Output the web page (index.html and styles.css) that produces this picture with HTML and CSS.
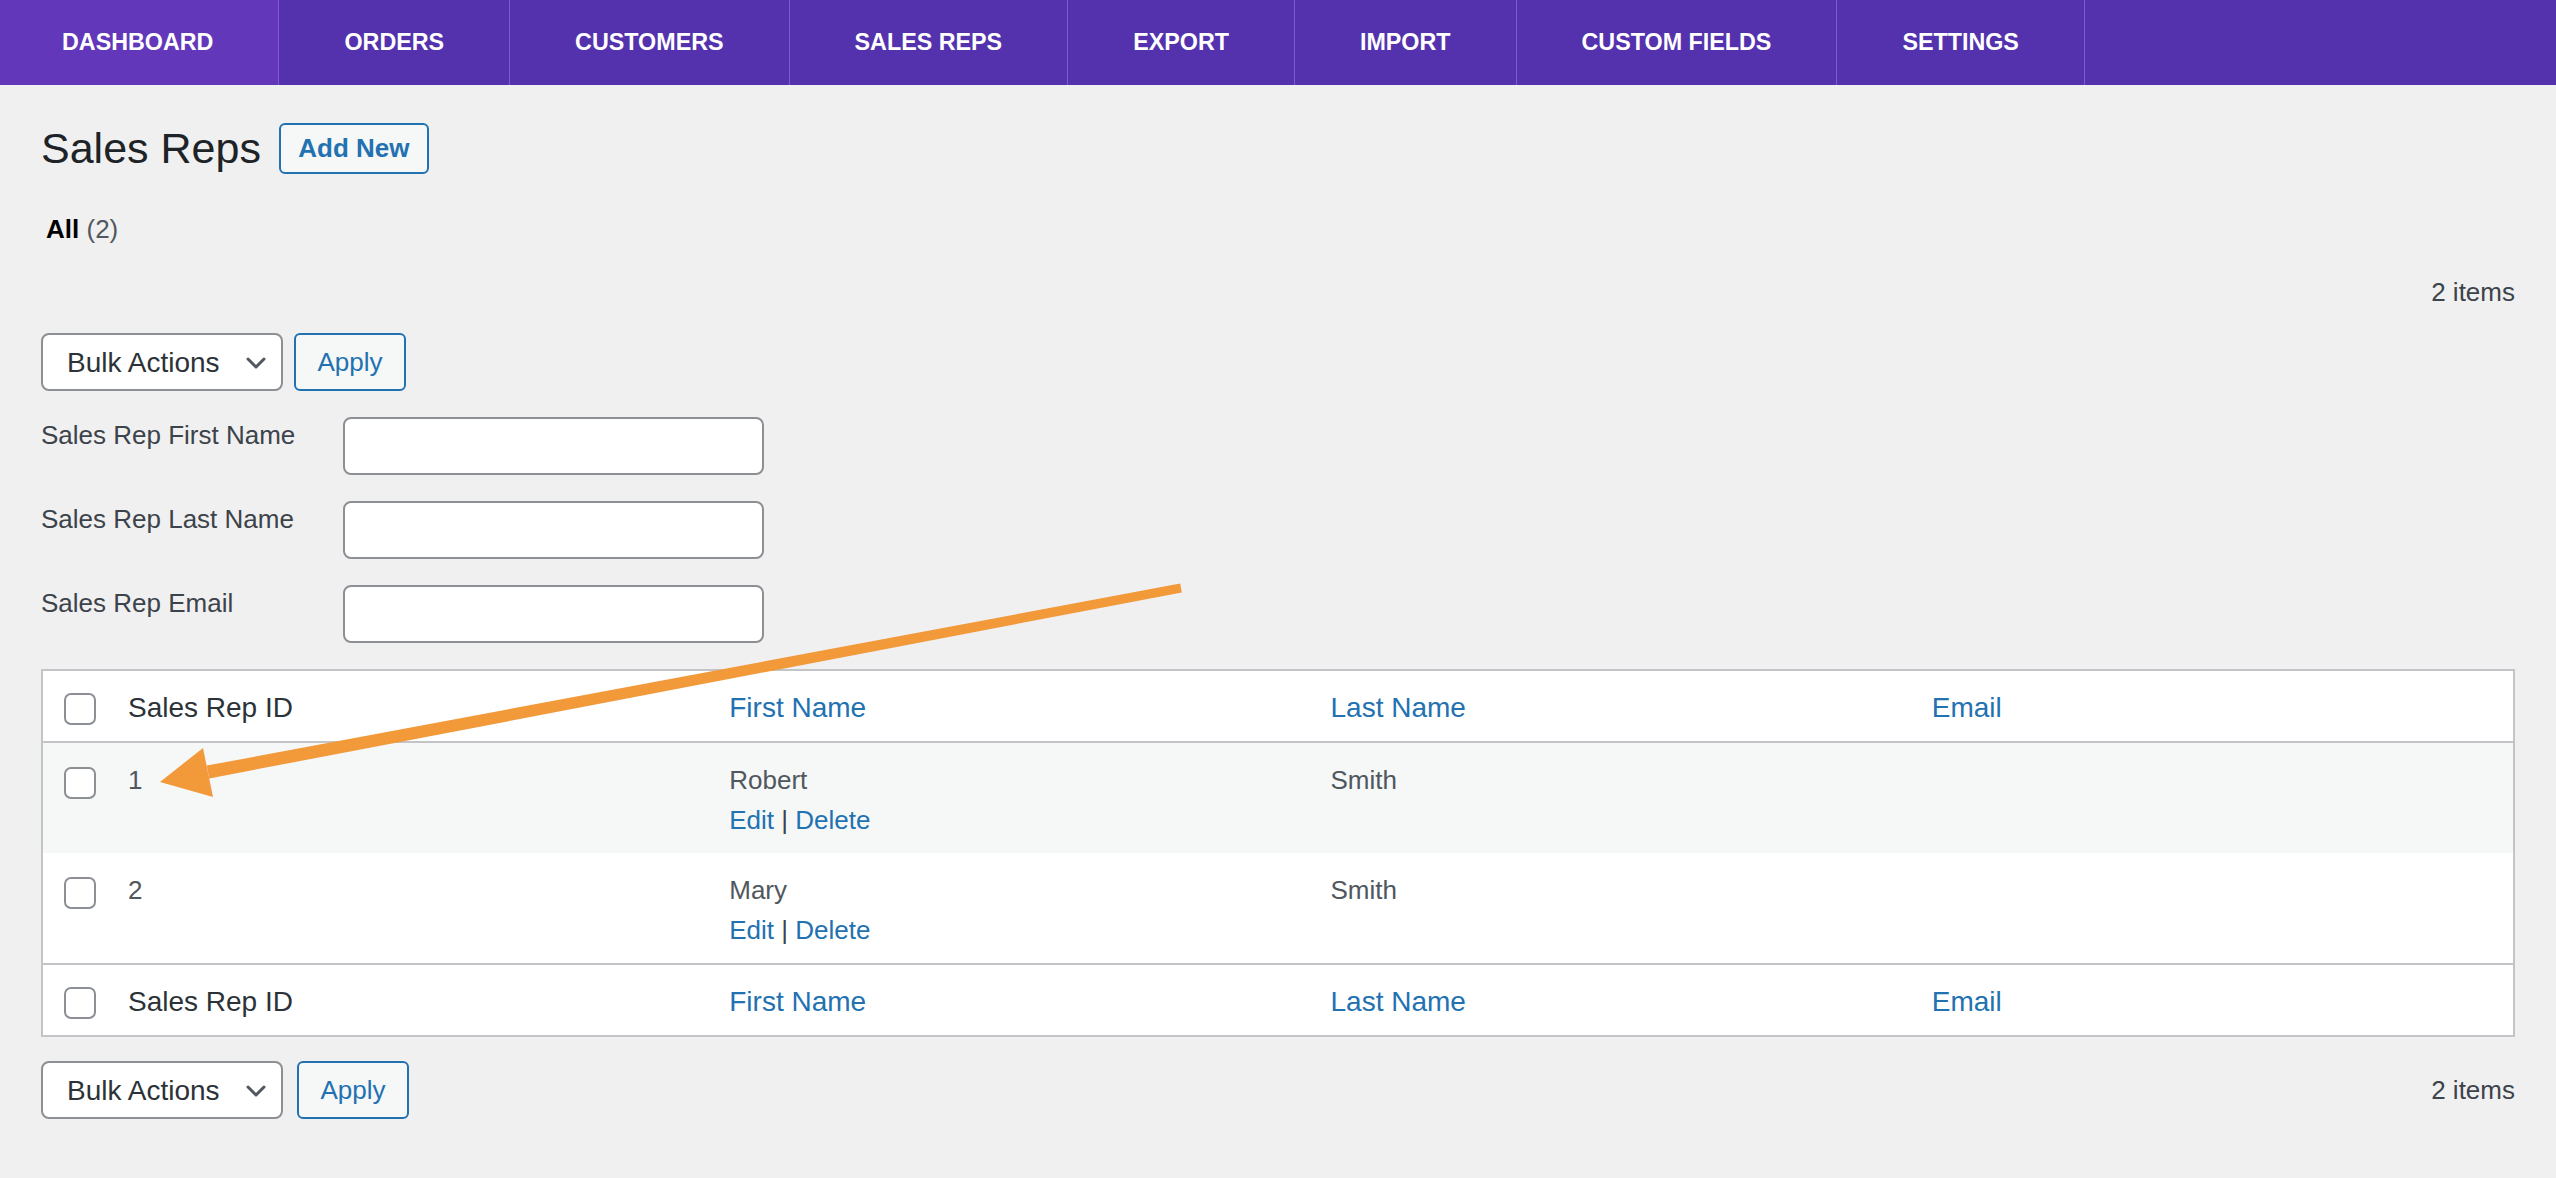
FILE: index.html
```html
<!DOCTYPE html>
<html lang="en">
<head>
<meta charset="utf-8">
<title>Sales Reps</title>
<link rel="stylesheet" href="styles.css">
</head>
<body>
<nav class="topnav">
  <a class="nav-item active" href="#">DASHBOARD</a>
  <a class="nav-item" href="#">ORDERS</a>
  <a class="nav-item" href="#">CUSTOMERS</a>
  <a class="nav-item" href="#">SALES REPS</a>
  <a class="nav-item" href="#">EXPORT</a>
  <a class="nav-item" href="#">IMPORT</a>
  <a class="nav-item" href="#">CUSTOM FIELDS</a>
  <a class="nav-item" href="#">SETTINGS</a>
</nav>

<main class="wrap">
  <div class="title-row">
    <h1 class="page-title">Sales Reps</h1>
    <a class="btn-outline add-new" href="#">Add New</a>
  </div>

  <div class="views"><strong>All</strong> <span class="count">(2)</span></div>

  <div class="items-count top-count">2 items</div>

  <div class="tablenav top">
    <div class="select-wrap">
      <select class="bulk-select"><option>Bulk Actions</option></select>
      <svg class="chevron" width="20" height="12" viewBox="0 0 20 12"><polyline points="2,2 10,10 18,2" fill="none" stroke="#50575e" stroke-width="3" stroke-linecap="round" stroke-linejoin="round"/></svg>
    </div>
    <button class="btn-outline apply" type="button">Apply</button>
  </div>

  <div class="filters">
    <div class="filter-row"><label>Sales Rep First Name</label><input class="text-input" type="text"></div>
    <div class="filter-row"><label>Sales Rep Last Name</label><input class="text-input" type="text"></div>
    <div class="filter-row"><label>Sales Rep Email</label><input class="text-input" type="text"></div>
  </div>

  <table class="list-table">
    <colgroup>
      <col class="col-cb">
      <col><col><col><col>
    </colgroup>
    <thead>
      <tr>
        <th class="cb"><input class="checkbox" type="checkbox"></th>
        <th>Sales Rep ID</th>
        <th><a href="#">First Name</a></th>
        <th><a href="#">Last Name</a></th>
        <th><a href="#">Email</a></th>
      </tr>
    </thead>
    <tbody>
      <tr class="alt">
        <td class="cb"><input class="checkbox" type="checkbox"></td>
        <td>1</td>
        <td>Robert<div class="row-actions"><a href="#">Edit</a> <span class="sep">|</span> <a href="#">Delete</a></div></td>
        <td>Smith</td>
        <td></td>
      </tr>
      <tr>
        <td class="cb"><input class="checkbox" type="checkbox"></td>
        <td>2</td>
        <td>Mary<div class="row-actions"><a href="#">Edit</a> <span class="sep">|</span> <a href="#">Delete</a></div></td>
        <td>Smith</td>
        <td></td>
      </tr>
    </tbody>
    <tfoot>
      <tr>
        <th class="cb"><input class="checkbox" type="checkbox"></th>
        <th>Sales Rep ID</th>
        <th><a href="#">First Name</a></th>
        <th><a href="#">Last Name</a></th>
        <th><a href="#">Email</a></th>
      </tr>
    </tfoot>
  </table>

  <div class="tablenav bottom">
    <div class="bulk-group">
      <div class="select-wrap">
        <select class="bulk-select"><option>Bulk Actions</option></select>
        <svg class="chevron" width="20" height="12" viewBox="0 0 20 12"><polyline points="2,2 10,10 18,2" fill="none" stroke="#50575e" stroke-width="3" stroke-linecap="round" stroke-linejoin="round"/></svg>
      </div>
      <button class="btn-outline apply" type="button">Apply</button>
    </div>
    <div class="items-count">2 items</div>
  </div>
</main>

<svg class="annotation" width="2556" height="1178" viewBox="0 0 2556 1178">
  <polygon points="1180.2,583.6 1181.8,592.4 209.2,778.4 206.8,765.6" fill="#f2993a"/>
  <polygon points="160,782 203,748 213,797" fill="#f2993a"/>
</svg>
</body>
</html>
```

FILE: styles.css
```css
* {
  box-sizing: border-box;
}

html,
body {
  margin: 0;
  padding: 0;
}

body {
  position: relative;
  min-height: 1178px;
  background: #f0f0f1;
  font-family: "Liberation Sans", Arial, sans-serif;
  font-size: 26px;
  color: #3c434a;
}

/* Top navigation */
.topnav {
  display: flex;
  height: 85px;
  background: #5532ad;
}

.nav-item {
  display: block;
  padding: 0 65px;
  line-height: 85px;
  font-size: 23.3px;
  font-weight: 700;
  color: #fff;
  text-decoration: none;
  white-space: nowrap;
  border-right: 1px solid #7a5ccf;
}

.nav-item.active {
  background: #6337ba;
  padding-left: 62px;
}

/* Content */
.wrap {
  padding: 0 41px;
}

.title-row {
  display: flex;
  align-items: center;
  height: 51px;
  margin-top: 38px;
}

.page-title {
  margin: 0;
  font-size: 43px;
  font-weight: 400;
  line-height: 51px;
  color: #1d2327;
}

.btn-outline {
  display: inline-flex;
  align-items: center;
  justify-content: center;
  padding: 0;
  border: 2px solid #2271b1;
  border-radius: 6px;
  background: #f6f7f7;
  color: #2271b1;
  font-family: inherit;
  font-size: 26px;
  text-decoration: none;
}

.add-new {
  width: 150px;
  height: 51px;
  margin-left: 18px;
  font-weight: 700;
}

.views {
  margin-top: 37px;
  padding-left: 5px;
  line-height: 36px;
}

.views strong {
  color: #000;
}

.views .count {
  color: #50575e;
}

.items-count {
  line-height: 36px;
  text-align: right;
  color: #3c434a;
}

.top-count {
  margin-top: 27px;
}

.tablenav {
  display: flex;
  align-items: center;
  height: 58px;
  margin-top: 23px;
}

.tablenav.bottom {
  justify-content: space-between;
  margin-top: 24px;
}

.bulk-group {
  display: flex;
  align-items: center;
}

.select-wrap {
  position: relative;
  width: 242px;
  height: 58px;
}

.bulk-select {
  -webkit-appearance: none;
  appearance: none;
  width: 100%;
  height: 100%;
  margin: 0;
  padding: 0 0 0 24px;
  border: 2px solid #8c8f94;
  border-radius: 8px;
  background: #fff;
  font-family: inherit;
  font-size: 28px;
  color: #2c3338;
}

.chevron {
  position: absolute;
  left: 205px;
  top: 24px;
  pointer-events: none;
}

.apply {
  width: 112px;
  height: 58px;
  margin-left: 11px;
}

.tablenav.bottom .apply {
  margin-left: 14px;
}

/* Filters */
.filters {
  display: flex;
  flex-direction: column;
  gap: 26px;
  margin-top: 26px;
}

.filter-row {
  display: flex;
  align-items: flex-start;
}

.filter-row label {
  width: 302px;
  line-height: 36px;
  color: #3c434a;
}

.text-input {
  width: 421px;
  height: 58px;
  margin: 0;
  border: 2px solid #8c8f94;
  border-radius: 8px;
  background: #fff;
}

/* Table */
.list-table {
  width: 100%;
  margin-top: 26px;
  border: 2px solid #c3c4c7;
  border-collapse: separate;
  border-spacing: 0;
  background: #fff;
  table-layout: fixed;
}

.col-cb {
  width: 65px;
}

.list-table th {
  padding: 18px 20px 14px;
  font-size: 28px;
  font-weight: 400;
  line-height: 38px;
  text-align: left;
  vertical-align: top;
  color: #2c3338;
}

.list-table th a {
  color: #2271b1;
  text-decoration: none;
}

.list-table thead th {
  border-bottom: 2px solid #c3c4c7;
}

.list-table tfoot th {
  border-top: 2px solid #c3c4c7;
}

.list-table td {
  padding: 17px 20px 13px;
  font-size: 26px;
  line-height: 40px;
  vertical-align: top;
  color: #50575e;
}

.list-table tr.alt {
  background: #f6f7f7;
}

.list-table .cb {
  padding: 22px 0 0 21px;
}

.list-table tbody .cb {
  padding-top: 24px;
}

.checkbox {
  -webkit-appearance: none;
  appearance: none;
  display: block;
  width: 32px;
  height: 32px;
  margin: 0;
  border: 2px solid #8c8f94;
  border-radius: 7px;
  background: #fff;
}

.row-actions a {
  color: #2271b1;
  text-decoration: none;
}

.row-actions .sep {
  color: #3c434a;
}

/* Annotation arrow overlay */
.annotation {
  position: absolute;
  top: 0;
  left: 0;
  pointer-events: none;
}
```
